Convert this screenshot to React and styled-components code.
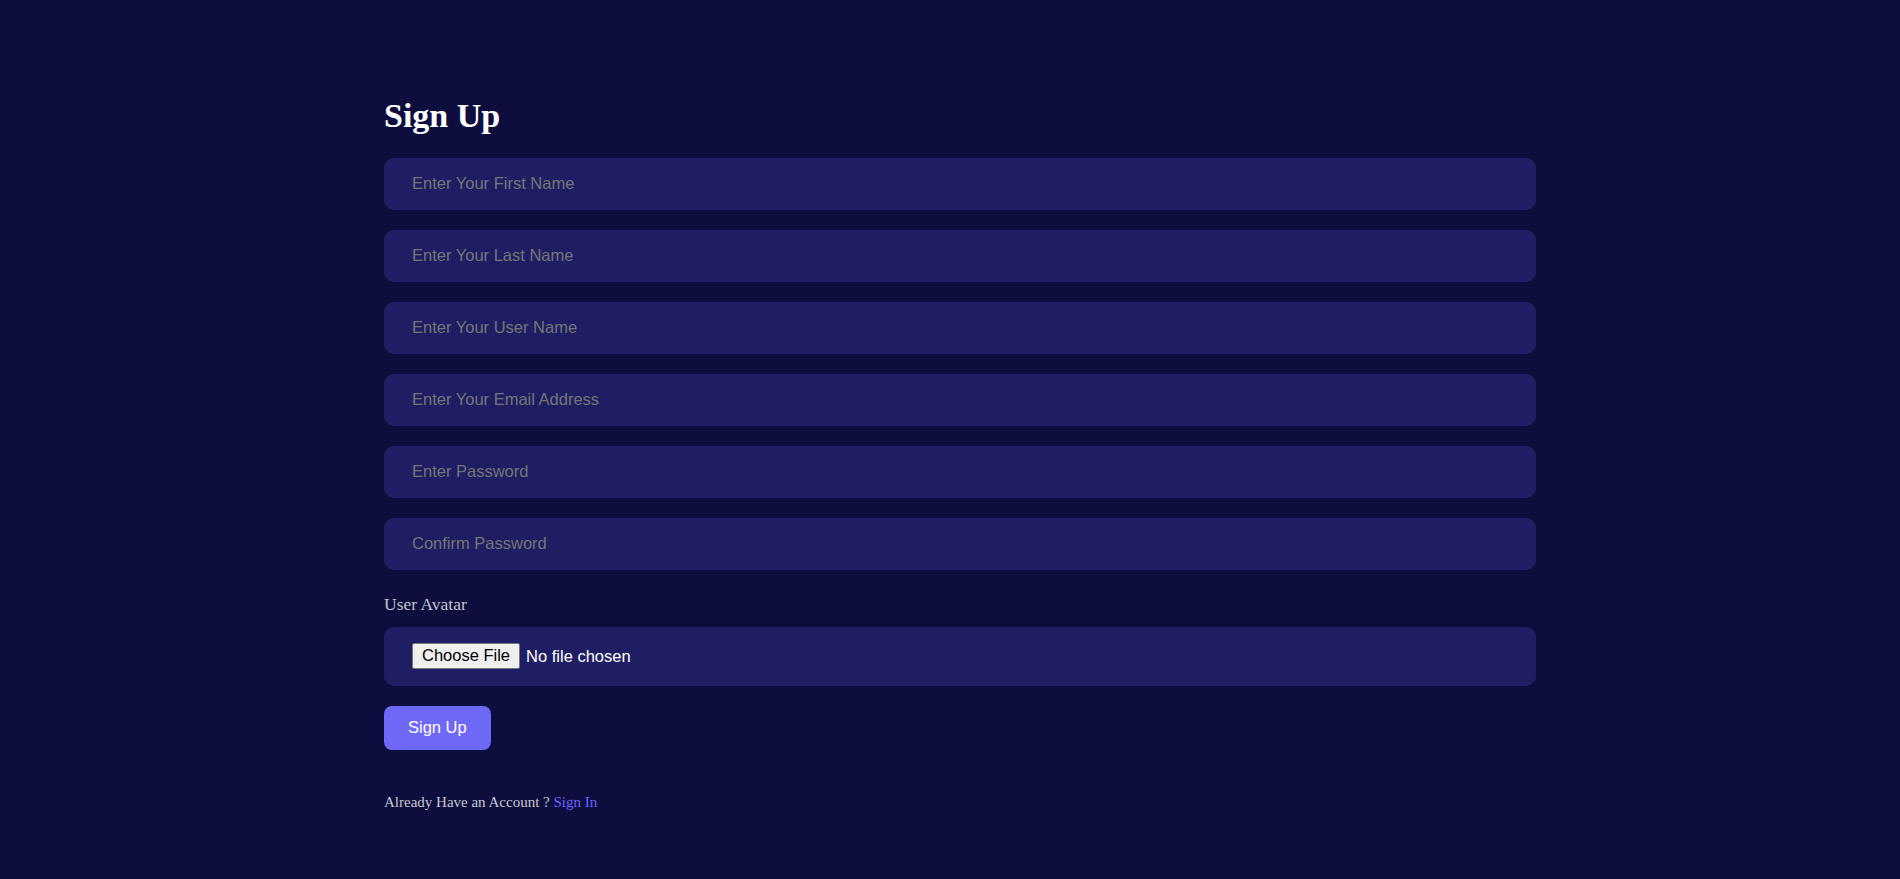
import React from 'react'
import styled, { createGlobalStyle } from 'styled-components'

const GlobalStyle = createGlobalStyle`
  body {
    margin: 0;
    background: #0e0e3e;
    min-height: 100vh;
  }
`

const Page = styled.div`
  display: flex;
  justify-content: center;
  padding: 99px 0 40px 20px;
`

const Form = styled.form`
  width: 1152px;
  display: flex;
  flex-direction: column;
`

const Title = styled.h1`
  margin: 0 0 25px;
  font-family: "Liberation Serif", "Times New Roman", serif;
  font-size: 34px;
  line-height: 34px;
  font-weight: bold;
  color: #ffffff;
`

const Fields = styled.div`
  display: flex;
  flex-direction: column;
  gap: 20px;
`

const Input = styled.input`
  box-sizing: border-box;
  height: 52px;
  padding: 0 28px 2px;
  border: none;
  border-radius: 10px;
  background: #1f1e64;
  color: #ffffff;
  font-family: "Liberation Sans", Arial, sans-serif;
  font-size: 16.5px;
  outline: none;

  &::placeholder {
    color: #757575;
  }
`

const Label = styled.label`
  margin-top: 24px;
  font-family: "Liberation Serif", "Times New Roman", serif;
  font-size: 17.5px;
  line-height: 20px;
  color: #c4c4cc;
`

const FileBox = styled.div`
  box-sizing: border-box;
  margin-top: 13px;
  height: 59px;
  padding: 0 28px 2px;
  display: flex;
  align-items: center;
  border-radius: 10px;
  background: #1f1e64;
`

const FileInput = styled.input`
  color: #ffffff;
  font-family: "Liberation Sans", Arial, sans-serif;
  font-size: 16.5px;

  &::file-selector-button {
    box-sizing: border-box;
    height: 26px;
    margin-right: 6px;
    padding: 0 9px;
    border: 1px solid #767676;
    border-radius: 2px;
    background: #efefef;
    color: #000000;
    font-family: "Liberation Sans", Arial, sans-serif;
    font-size: 16.5px;
  }
`

const SubmitButton = styled.button`
  align-self: flex-start;
  margin-top: 20px;
  height: 44px;
  padding: 0 24px 2px;
  border: none;
  border-radius: 8px;
  background: #6f69fa;
  color: #ffffff;
  font-family: "Liberation Sans", Arial, sans-serif;
  font-size: 16.5px;
  cursor: pointer;
`

const Footer = styled.p`
  margin: 44px 0 0;
  font-family: "Liberation Serif", "Times New Roman", serif;
  font-size: 15px;
  color: #c8c8d0;
`

const FooterLink = styled.a`
  color: #6a63ff;
  text-decoration: none;
`

const fields = [
  { type: 'text', placeholder: 'Enter Your First Name' },
  { type: 'text', placeholder: 'Enter Your Last Name' },
  { type: 'text', placeholder: 'Enter Your User Name' },
  { type: 'email', placeholder: 'Enter Your Email Address' },
  { type: 'password', placeholder: 'Enter Password' },
  { type: 'password', placeholder: 'Confirm Password' },
]

class App extends React.Component {
  render() {
    return (
      <Page>
        <GlobalStyle />
        <Form onSubmit={e => e.preventDefault()}>
          <Title>Sign Up</Title>
          <Fields>
            {fields.map((field, index) => (
              <Input key={index} type={field.type} placeholder={field.placeholder} />
            ))}
          </Fields>
          <Label htmlFor="avatar">User Avatar</Label>
          <FileBox>
            <FileInput id="avatar" type="file" />
          </FileBox>
          <SubmitButton type="submit">Sign Up</SubmitButton>
          <Footer>
            Already Have an Account ? <FooterLink href="#">Sign In</FooterLink>
          </Footer>
        </Form>
      </Page>
    )
  }
}

export default App
